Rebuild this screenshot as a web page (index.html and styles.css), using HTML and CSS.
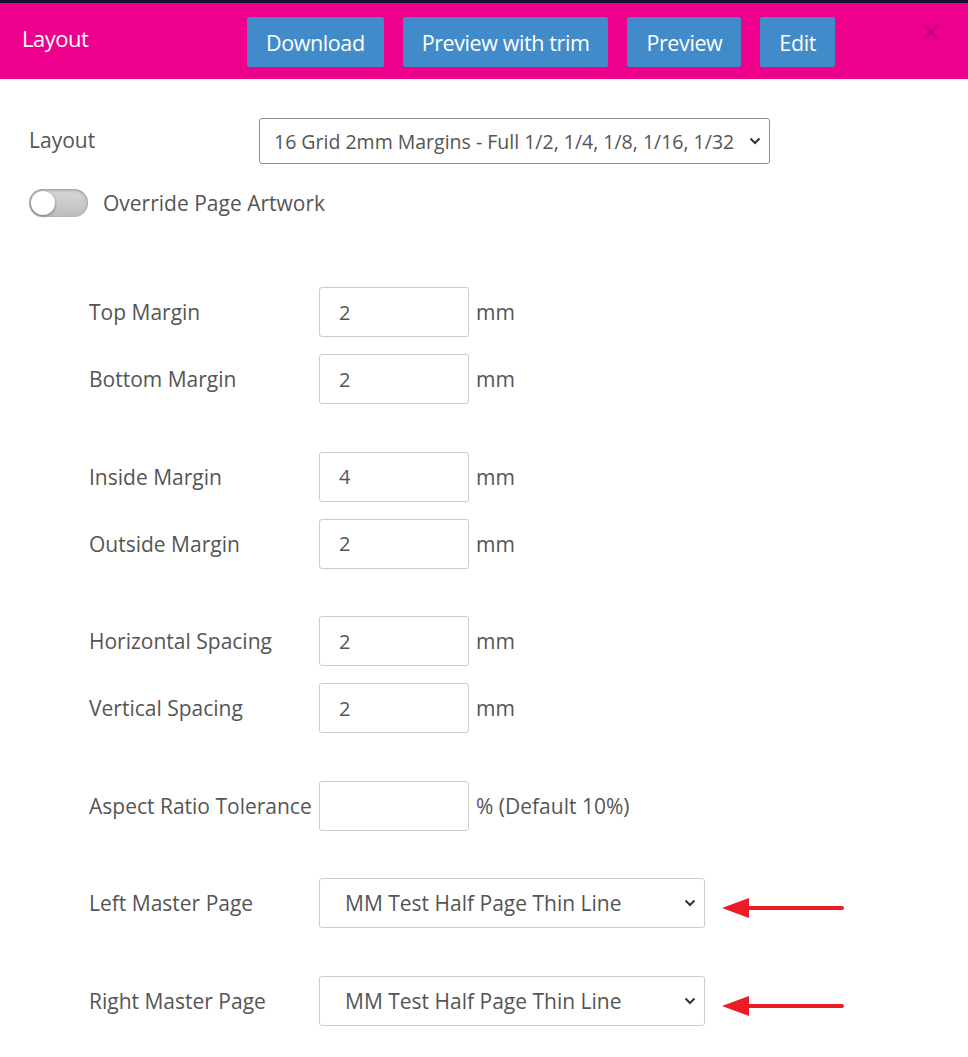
FILE: index.html
```html
<!DOCTYPE html>
<html lang="en">
<head>
    <meta charset="UTF-8">
    <title>Layout</title>
    <link rel="stylesheet" href="styles.css">
</head>
<body>

    <!-- Page behind the modal (only a sliver shows) -->
    <div class="backdrop-strip"></div>

    <!-- Modal header -->
    <header class="modal-header">
        <div class="modal-title">Layout</div>
        <div class="header-buttons">
            <button class="btn">Download</button>
            <button class="btn">Preview with trim</button>
            <button class="btn">Preview</button>
            <button class="btn">Edit</button>
        </div>
        <svg class="close" width="16" height="16" viewBox="0 0 16 16">
            <path d="M2 2 L14 14 M14 2 L2 14" stroke="#c2007a" stroke-width="3" stroke-linecap="square"/>
        </svg>
    </header>

    <!-- Modal body -->
    <div class="modal-body">
        <div class="layout-row">
            <label class="layout-label">Layout</label>
            <select class="layout-select">
                <option>16 Grid 2mm Margins - Full 1/2, 1/4, 1/8, 1/16, 1/32</option>
            </select>
        </div>

        <div class="toggle-row">
            <span class="toggle"><span class="knob"></span></span>
            <span>Override Page Artwork</span>
        </div>

        <div class="settings">
            <div class="group">
                <div class="field">
                    <label>Top Margin</label>
                    <input type="text" value="2">
                    <span class="unit">mm</span>
                </div>
                <div class="field">
                    <label>Bottom Margin</label>
                    <input type="text" value="2">
                    <span class="unit">mm</span>
                </div>
            </div>

            <div class="group">
                <div class="field">
                    <label>Inside Margin</label>
                    <input type="text" value="4">
                    <span class="unit">mm</span>
                </div>
                <div class="field">
                    <label>Outside Margin</label>
                    <input type="text" value="2">
                    <span class="unit">mm</span>
                </div>
            </div>

            <div class="group">
                <div class="field">
                    <label>Horizontal Spacing</label>
                    <input type="text" value="2">
                    <span class="unit">mm</span>
                </div>
                <div class="field">
                    <label>Vertical Spacing</label>
                    <input type="text" value="2">
                    <span class="unit">mm</span>
                </div>
            </div>

            <div class="group">
                <div class="field">
                    <label>Aspect Ratio Tolerance</label>
                    <input type="text" value="">
                    <span class="unit">% (Default 10%)</span>
                </div>
            </div>

            <div class="group">
                <div class="field">
                    <label>Left Master Page</label>
                    <select class="master-select">
                        <option>MM Test Half Page Thin Line</option>
                    </select>
                    <svg class="arrow" width="124" height="24" viewBox="0 0 124 24">
                        <path d="M0 12 L27 2 L27 22 Z" fill="#ed1c24"/>
                        <line x1="24" y1="12" x2="120" y2="12" stroke="#ed1c24" stroke-width="4" stroke-linecap="round"/>
                    </svg>
                </div>
            </div>

            <div class="group">
                <div class="field">
                    <label>Right Master Page</label>
                    <select class="master-select">
                        <option>MM Test Half Page Thin Line</option>
                    </select>
                    <svg class="arrow" width="124" height="24" viewBox="0 0 124 24">
                        <path d="M0 12 L27 2 L27 22 Z" fill="#ed1c24"/>
                        <line x1="24" y1="12" x2="120" y2="12" stroke="#ed1c24" stroke-width="4" stroke-linecap="round"/>
                    </svg>
                </div>
            </div>
        </div>
    </div>

</body>
</html>
```

FILE: styles.css
```css
/* General Styles */
body {
    font-family: 'Open Sans', sans-serif;
    margin: 0;
    padding: 0;
    background-color: #fff;
    color: #555;
}

.backdrop-strip {
    height: 3px;
    background-color: #15132b;
}

/* Header */
.modal-header {
    position: relative;
    background-color: #ec008c;
    height: 76px;
    padding-left: 22px;
    display: flex;
    align-items: center;
}

.modal-title {
    width: 225px;
    color: #fff;
    font-size: 22px;
    margin-top: -7px;
    letter-spacing: -0.5px;
}

.header-buttons {
    display: flex;
    gap: 19px;
    margin-top: 2px;
}

.btn {
    font-family: 'Open Sans', sans-serif;
    font-size: 21.5px;
    color: #fff;
    background-color: #428bca;
    border: none;
    border-radius: 2px;
    height: 50px;
    padding: 0 19px;
    letter-spacing: -0.4px;
}

.close {
    position: absolute;
    left: 923px;
    top: 21px;
    opacity: 0.75;
}

/* Body */
.modal-body {
    padding: 39px 29px 20px;
}

.layout-row {
    display: flex;
    align-items: center;
}

.layout-label {
    width: 230px;
    font-size: 21px;
    margin-top: -2px;
}

/* Chevron drawn as an svg background */
select {
    appearance: none;
    background-color: #fff;
    background-image: url("data:image/svg+xml;utf8,<svg xmlns='http://www.w3.org/2000/svg' width='12' height='8' viewBox='0 0 12 8'><path d='M1.5 1.5 L6 6 L10.5 1.5' fill='none' stroke='%23333' stroke-width='2'/></svg>");
    background-repeat: no-repeat;
}

.layout-select {
    font-family: 'Open Sans', sans-serif;
    font-size: 19.5px;
    color: #555;
    width: 511px;
    height: 46px;
    padding: 0 10px 0 14px;
    border: 1px solid #8f8f8f;
    border-radius: 3px;
    background-position: right 8px center;
}

.toggle-row {
    display: flex;
    align-items: center;
    gap: 15px;
    margin-top: 25px;
    font-size: 21px;
}

.toggle {
    width: 59px;
    height: 28px;
    border-radius: 14px;
    background: linear-gradient(#d8d8d8, #bdbdbd);
    box-shadow: inset 0 1px 3px rgba(0, 0, 0, 0.35);
    display: flex;
    align-items: center;
    padding-left: 2px;
    box-sizing: border-box;
}

.toggle .knob {
    width: 24px;
    height: 24px;
    border-radius: 50%;
    background-color: #fff;
    box-shadow: 0 1px 3px rgba(0, 0, 0, 0.4);
}

/* Settings */
.settings {
    padding-left: 60px;
    margin-top: 70px;
}

.group {
    display: flex;
    flex-direction: column;
    gap: 17px;
    margin-bottom: 47.5px;
}

.field {
    display: flex;
    align-items: center;
    font-size: 21px;
}

.field label {
    width: 230px;
}

.field input {
    font-family: 'Open Sans', sans-serif;
    font-size: 20px;
    color: #555;
    width: 150px;
    height: 50px;
    box-sizing: border-box;
    padding: 0 19px;
    border: 1px solid #ccc;
    border-radius: 3px;
}

.unit {
    margin-left: 7px;
}

.master-select {
    font-family: 'Open Sans', sans-serif;
    font-size: 21px;
    color: #555;
    width: 386px;
    height: 50px;
    padding: 0 20px 0 25px;
    border: 1px solid #ccc;
    border-radius: 3px;
    background-position: right 8px center;
}

.arrow {
    margin-left: 17px;
    margin-top: 10px;
}
```
